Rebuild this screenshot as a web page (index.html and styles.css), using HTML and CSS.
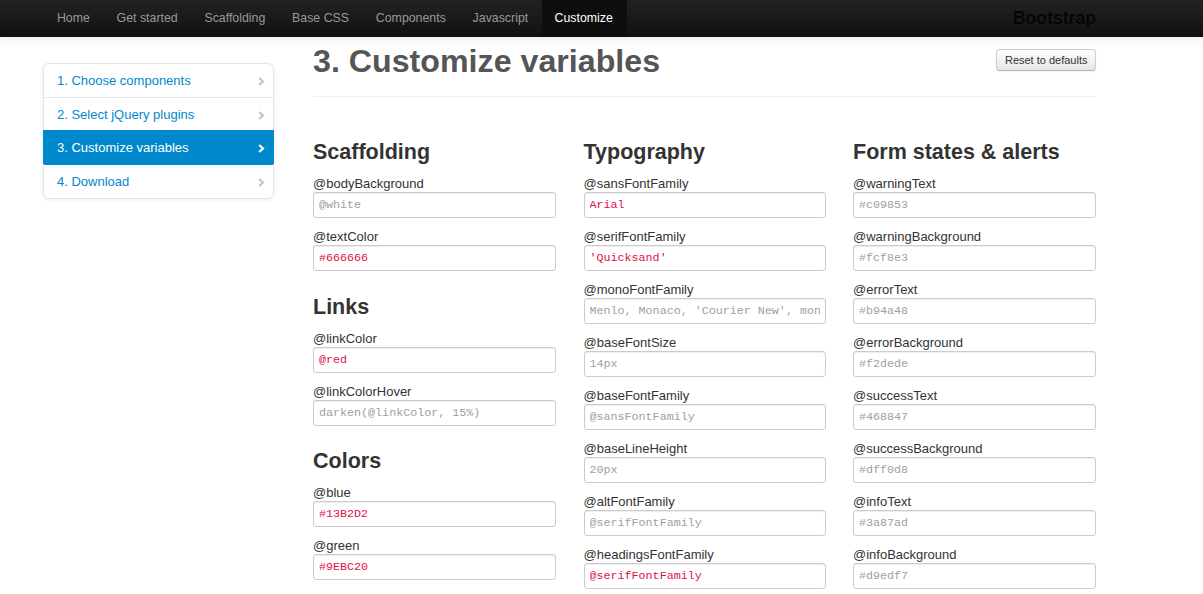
FILE: index.html
```html
<!DOCTYPE html>
<html lang="en">
<head>
<meta charset="utf-8">
<title>Customize · Bootstrap</title>
<link rel="stylesheet" href="styles.css">
</head>
<body>
<header class="navbar">
  <nav class="nav-inner">
    <ul class="nav">
      <li><a href="#">Home</a></li>
      <li><a href="#">Get started</a></li>
      <li><a href="#">Scaffolding</a></li>
      <li><a href="#">Base CSS</a></li>
      <li><a href="#">Components</a></li>
      <li><a href="#">Javascript</a></li>
      <li class="active"><a href="#">Customize</a></li>
    </ul>
    <a class="brand" href="#">Bootstrap</a>
  </nav>
</header>

<div class="page">
  <aside class="sidebar">
    <ul class="sidenav">
      <li><a href="#">1. Choose components<svg class="chev" viewBox="0 0 7 9" width="7" height="9"><polyline points="1.2,1 5,4.5 1.2,8" fill="none" stroke="currentColor" stroke-width="2.2"/></svg></a></li>
      <li><a href="#">2. Select jQuery plugins<svg class="chev" viewBox="0 0 7 9" width="7" height="9"><polyline points="1.2,1 5,4.5 1.2,8" fill="none" stroke="currentColor" stroke-width="2.2"/></svg></a></li>
      <li class="active"><a href="#">3. Customize variables<svg class="chev" viewBox="0 0 7 9" width="7" height="9"><polyline points="1.2,1 5,4.5 1.2,8" fill="none" stroke="currentColor" stroke-width="2.2"/></svg></a></li>
      <li><a href="#">4. Download<svg class="chev" viewBox="0 0 7 9" width="7" height="9"><polyline points="1.2,1 5,4.5 1.2,8" fill="none" stroke="currentColor" stroke-width="2.2"/></svg></a></li>
    </ul>
  </aside>

  <main class="content">
    <div class="page-header">
      <h1>3. Customize variables</h1>
      <button class="btn" type="button">Reset to defaults</button>
    </div>

    <div class="columns">
      <section class="col">
        <h3>Scaffolding</h3>
        <div class="field"><label>@bodyBackground</label><input type="text" placeholder="@white"></div>
        <div class="field"><label>@textColor</label><input type="text" value="#666666"></div>

        <h3>Links</h3>
        <div class="field"><label>@linkColor</label><input type="text" value="@red"></div>
        <div class="field"><label>@linkColorHover</label><input type="text" placeholder="darken(@linkColor, 15%)"></div>

        <h3>Colors</h3>
        <div class="field"><label>@blue</label><input type="text" value="#13B2D2"></div>
        <div class="field"><label>@green</label><input type="text" value="#9EBC20"></div>
        <div class="field"><label>@red</label><input type="text" value="#E3412D"></div>
      </section>

      <section class="col">
        <h3>Typography</h3>
        <div class="field"><label>@sansFontFamily</label><input type="text" value="Arial"></div>
        <div class="field"><label>@serifFontFamily</label><input type="text" value="'Quicksand'"></div>
        <div class="field"><label>@monoFontFamily</label><input type="text" placeholder="Menlo, Monaco, 'Courier New', monospace"></div>
        <div class="field"><label>@baseFontSize</label><input type="text" placeholder="14px"></div>
        <div class="field"><label>@baseFontFamily</label><input type="text" placeholder="@sansFontFamily"></div>
        <div class="field"><label>@baseLineHeight</label><input type="text" placeholder="20px"></div>
        <div class="field"><label>@altFontFamily</label><input type="text" placeholder="@serifFontFamily"></div>
        <div class="field"><label>@headingsFontFamily</label><input type="text" value="@serifFontFamily"></div>
      </section>

      <section class="col">
        <h3>Form states &amp; alerts</h3>
        <div class="field"><label>@warningText</label><input type="text" placeholder="#c09853"></div>
        <div class="field"><label>@warningBackground</label><input type="text" placeholder="#fcf8e3"></div>
        <div class="field"><label>@errorText</label><input type="text" placeholder="#b94a48"></div>
        <div class="field"><label>@errorBackground</label><input type="text" placeholder="#f2dede"></div>
        <div class="field"><label>@successText</label><input type="text" placeholder="#468847"></div>
        <div class="field"><label>@successBackground</label><input type="text" placeholder="#dff0d8"></div>
        <div class="field"><label>@infoText</label><input type="text" placeholder="#3a87ad"></div>
        <div class="field"><label>@infoBackground</label><input type="text" placeholder="#d9edf7"></div>
      </section>
    </div>
  </main>
</div>
</body>
</html>
```

FILE: styles.css
```css
html {
  overflow: hidden;
}

body {
  margin: 0;
  background: #fff;
  color: #333;
  font-family: "Liberation Sans", Arial, sans-serif;
  font-size: 13px;
  line-height: 18px;
}

ul {
  list-style: none;
  margin: 0;
  padding: 0;
}

a {
  text-decoration: none;
}

/* ---------- navbar ---------- */
.navbar {
  height: 37px;
  background: linear-gradient(to bottom, #222 0%, #111 100%);
  box-shadow: 0 1px 10px rgba(0, 0, 0, 0.1);
  position: relative;
  z-index: 2;
}

.nav-inner {
  display: flex;
  align-items: stretch;
  height: 100%;
  padding-left: 43.5px;
  width: 1052.5px;
}

.nav {
  display: flex;
  align-items: stretch;
  flex: 1;
}

.nav li {
  display: flex;
}

.nav a {
  display: flex;
  align-items: center;
  padding: 0 13.4px;
  color: #999;
  font-size: 12.35px;
  padding-bottom: 1px;
}

.nav li.active a {
  color: #fff;
  background: #0e0e0e;
  padding-left: 13px;
  padding-right: 14px;
}

.brand {
  display: flex;
  align-items: center;
  color: #050505;
  font-weight: bold;
  font-size: 17.6px;
  padding-bottom: 1px;
  text-shadow: 0 0 1px rgba(60, 60, 60, 0.4);
}

/* ---------- page ---------- */
.page {
  display: flex;
  align-items: flex-start;
  padding-left: 43px;
  gap: 39px;
}

.sidebar {
  width: 231px;
  flex: none;
  margin-top: 26px;
}

.sidenav {
  border: 1px solid #e5e5e5;
  border-radius: 6px;
  background: #fff;
  box-shadow: 0 1px 4px rgba(0, 0, 0, 0.065);
}

.sidenav li + li {
  border-top: 1px solid #e5e5e5;
}

.sidenav a {
  display: flex;
  align-items: center;
  justify-content: space-between;
  padding: 7.5px 8px 7.5px 13px;
  line-height: 18px;
  color: #0088cc;
  font-size: 13px;
}

.sidenav .chev {
  color: #c4c4c4;
  flex: none;
  margin-top: 1px;
}

.sidenav li.active {
  margin: -1px -1px 0;
  border-top: 1px solid #0088cc;
  position: relative;
}

.sidenav li.active a {
  background: #0088cc;
  color: #fff;
  padding-left: 14px;
  padding-right: 9px;
}

.sidenav li.active .chev {
  color: #fff;
}

.sidenav li.active + li {
  border-top-color: #0088cc;
}

/* ---------- content ---------- */
.content {
  width: 783px;
  flex: none;
  margin-top: 4px;
}

.page-header {
  display: flex;
  justify-content: space-between;
  align-items: flex-start;
  padding-bottom: 15px;
  border-bottom: 1px solid #eee;
}

.page-header h1 {
  margin: 0;
  font-size: 32.2px;
  line-height: 40px;
  font-weight: bold;
  color: #555;
}

.btn {
  margin-top: 7.5px;
  height: 22px;
  padding: 0 7.5px;
  font-family: "Liberation Sans", Arial, sans-serif;
  font-size: 11px;
  color: #333;
  background: linear-gradient(to bottom, #ffffff, #e6e6e6);
  border: 1px solid #cccccc;
  border-bottom-color: #b3b3b3;
  border-radius: 4px;
  box-shadow: inset 0 1px 0 rgba(255, 255, 255, 0.2), 0 1px 2px rgba(0, 0, 0, 0.05);
}

.columns {
  display: grid;
  grid-template-columns: 243px 242px 243px;
  column-gap: 27.5px;
  margin-top: 42px;
}

.col h3 {
  margin: 22.5px 0 11px;
  font-size: 21.5px;
  line-height: 26px;
  font-weight: bold;
  color: #333;
}

.col h3:first-child {
  margin-top: 0;
}

.field {
  margin-bottom: 11px;
}

.field label {
  display: block;
  line-height: 16px;
  font-size: 13px;
  color: #333;
}

.field input {
  display: block;
  box-sizing: border-box;
  width: 100%;
  height: 26px;
  margin: 0;
  padding: 0 5px;
  border: 1px solid #ccc;
  border-radius: 3px;
  box-shadow: inset 0 1px 1px rgba(0, 0, 0, 0.075);
  font-family: "Liberation Mono", "Courier New", monospace;
  font-size: 11.7px;
  color: #dd1144;
  background: #fff;
  outline: none;
}

.field input::placeholder {
  color: #a0a0a0;
}
```
